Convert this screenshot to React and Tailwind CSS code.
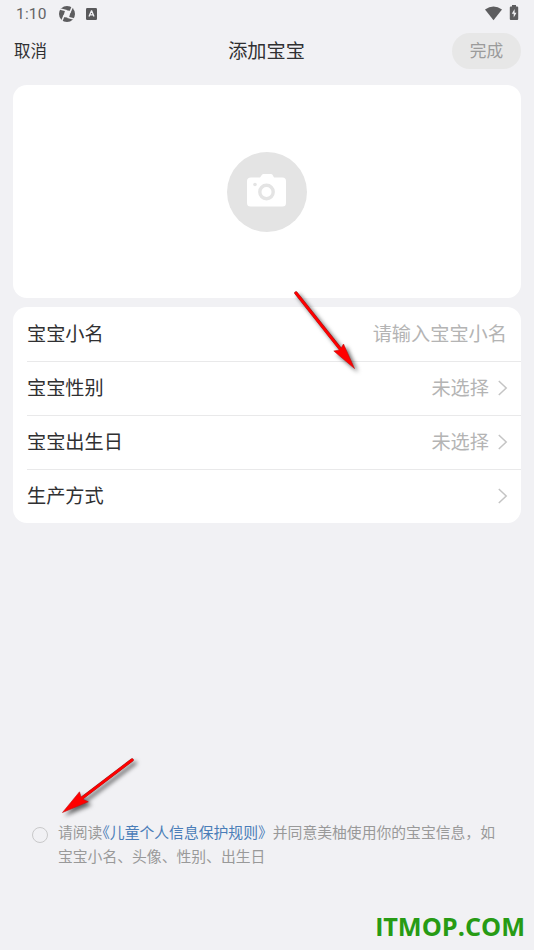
import React from 'react';

const rows = [
  { label: '宝宝小名', value: '请输入宝宝小名', arrow: false },
  { label: '宝宝性别', value: '未选择', arrow: true },
  { label: '宝宝出生日', value: '未选择', arrow: true },
  { label: '生产方式', value: '', arrow: true },
];

function StatusBar() {
  return (
    <div className="flex h-[28px] items-center pr-[15px] pl-[16px] text-[#636365]">
      <span className="mt-[1px] w-[43px] font-[Roboto] text-[15.5px] tracking-[0.2px]">1:10</span>
      <svg className="mt-[-1px] h-[16px] w-[16px]" viewBox="0 0 16 16">
        <circle cx="8" cy="8" r="8" fill="#5d5d5f" />
        <path d="M6.200 4 11.800 5 10 11.800 4.200 11Z" fill="#f1f1f4" />
        <path
          d="M7 4.600 2 3.200M11 6.200 12.800 2M9.200 11.400 14 12.800M5 9.800 3.200 14"
          stroke="#f1f1f4"
          strokeWidth="1.600"
          strokeLinecap="square"
        />
      </svg>
      <svg className="ml-[11px] h-[12px] w-[11px]" viewBox="0 0 11 12">
        <rect width="11" height="12" rx="1.2" fill="#59595b" />
        <path d="M3 8.5 5.4 3h.3L8 8.5M4 6.8h3" fill="none" stroke="#f1f1f4" strokeWidth="1.3" />
      </svg>
      <svg className="mt-[-2px] ml-auto h-[15px] w-[17px]" viewBox="0 0 17 15">
        <path d="M0 3.6Q8.5-2.8 17 3.6L8.5 14.2Z" fill="#5d5d5f" />
      </svg>
      <svg className="mt-[-3px] ml-[7px] h-[15px] w-[10px]" viewBox="0 0 10 15">
        <path d="M3 0h4v1.5h1.2q1 0 1 1V14q0 1-1 1H1.8q-1 0-1-1V2.500q0-1 1-1H3Z" fill="#5d5d5f" />
        <path d="M5.600 4 2.800 8.700h1.900V12.500L7.500 7.700H5.600Z" fill="#f1f1f4" />
      </svg>
    </div>
  );
}

function Header() {
  return (
    <div className="mt-[5px] grid h-[36px] grid-cols-3 items-center pr-[13px] pl-[14px]">
      <span className="mt-[-2px] text-[16.5px] text-[#303032]">取消</span>
      <span className="mt-[-2px] pr-[2px] text-center text-[19.2px] whitespace-nowrap text-[#303032]">添加宝宝</span>
      <button className="h-[36px] w-[69px] justify-self-end rounded-full bg-[#e7e7e7] text-[16.7px] text-[#9b9b9b]">
        完成
      </button>
    </div>
  );
}

function PhotoCard() {
  return (
    <div className="mx-[13px] mt-[16px] flex h-[213px] items-center justify-center rounded-[14px] bg-white">
      <div className="flex h-[80px] w-[80px] items-center justify-center rounded-full bg-[#e4e4e4]">
        <svg className="mt-[-2px] mr-[1px] h-[33px] w-[39px]" viewBox="0 0 39 33">
          <path
            d="M4 3.600h9L15 .8Q15.500 0 16.500 0H24Q25 0 25.500.8L27 3.600h8.500q3.500 0 3.500 3.500V29q0 3.500-3.500 3.500h-32Q0 32.500 0 29V7.100Q0 3.600 4 3.600Z"
            fill="#fff"
          />
          <circle cx="19.500" cy="18" r="6.700" fill="none" stroke="#e4e4e4" strokeWidth="3.400" />
          <circle cx="8" cy="10.500" r="1.800" fill="#e4e4e4" />
        </svg>
      </div>
    </div>
  );
}

function FormRow({ label, value, arrow, first }) {
  return (
    <div className={`flex h-[54px] items-center pr-[13px] pb-[2px] ${first ? '' : 'border-t border-[#e9e9ea]'}`}>
      <span className="text-[19.2px] text-[#303032]">{label}</span>
      <span className={`ml-auto text-[19.2px] text-[#b4b4b4] ${arrow ? '' : 'pr-[1px]'}`}>{value}</span>
      {arrow && (
        <svg
          className="mt-[1px] ml-[9px] h-[16px] w-[10px]"
          viewBox="0 0 10 16"
          fill="none"
          stroke="#c4c4c4"
          strokeWidth="1.500"
        >
          <path d="M.8 1 8.200 8 .8 15" />
        </svg>
      )}
    </div>
  );
}

function Agreement() {
  return (
    <div className="mt-[297px] flex pl-[32px]">
      <span className="mt-[7px] h-[16px] w-[16px] shrink-0 rounded-full border border-[#c9c9ca]" />
      <p className="ml-[10px] text-[14.82px] leading-[24px] whitespace-nowrap text-[#999999]">
        请阅读
        <span className="text-[#4a7db8]">
          <span className="[font-feature-settings:'halt']">《</span>
          儿童个人信息保护规则》
        </span>
        并同意美柚使用你的宝宝信息，如
        <br />
        宝宝小名、头像、性别、出生日
      </p>
    </div>
  );
}

export default function App() {
  return (
    <div className="relative h-[950px] w-[534px] overflow-hidden bg-[#f1f1f4] font-['Noto_Sans_CJK_SC',sans-serif]">
      <StatusBar />
      <Header />
      <PhotoCard />
      <div className="mx-[13px] mt-[9px] h-[216px] rounded-[14px] bg-white pl-[14px]">
        {rows.map((row, i) => (
          <FormRow key={row.label} {...row} first={i === 0} />
        ))}
      </div>
      <Agreement />

      {/* red pointer arrows */}
      <svg
        className="absolute top-[284px] left-[288px] h-[96px] w-[80px] drop-shadow-[3px_3px_2px_rgba(0,0,0,0.6)]"
        viewBox="288 284 80 96"
      >
        <path d="M296 293 342 351" stroke="#8c2020" strokeWidth="3.400" strokeLinecap="round" />
        <path d="M354.500 368.500 333.800 351 340 350 343.500 344Z" fill="#f00" stroke="#c01010" strokeWidth=".6" />
        <path d="M296 293 344 354" stroke="#f00" strokeWidth="2.800" strokeLinecap="round" />
      </svg>
      <svg
        className="absolute top-[750px] left-[54px] h-[74px] w-[90px] drop-shadow-[3px_3px_2px_rgba(0,0,0,0.6)]"
        viewBox="54 750 90 74"
      >
        <path d="M132 760 82 798" stroke="#8c2020" strokeWidth="3.400" strokeLinecap="round" />
        <path d="M62.500 812.500 79.500 791.800 81.500 798.500 88.300 801.800Z" fill="#f00" stroke="#c01010" strokeWidth=".6" />
        <path d="M132 760 79 800.500" stroke="#f00" strokeWidth="2.800" strokeLinecap="round" />
      </svg>

      <span className="absolute right-[9px] bottom-[8px] font-['Open_Sans',sans-serif] text-[25.3px] leading-[32px] font-bold whitespace-nowrap text-[#279b14]">
        <span className="font-[Lato] font-black">I</span>TMOP.COM
      </span>
    </div>
  );
}
